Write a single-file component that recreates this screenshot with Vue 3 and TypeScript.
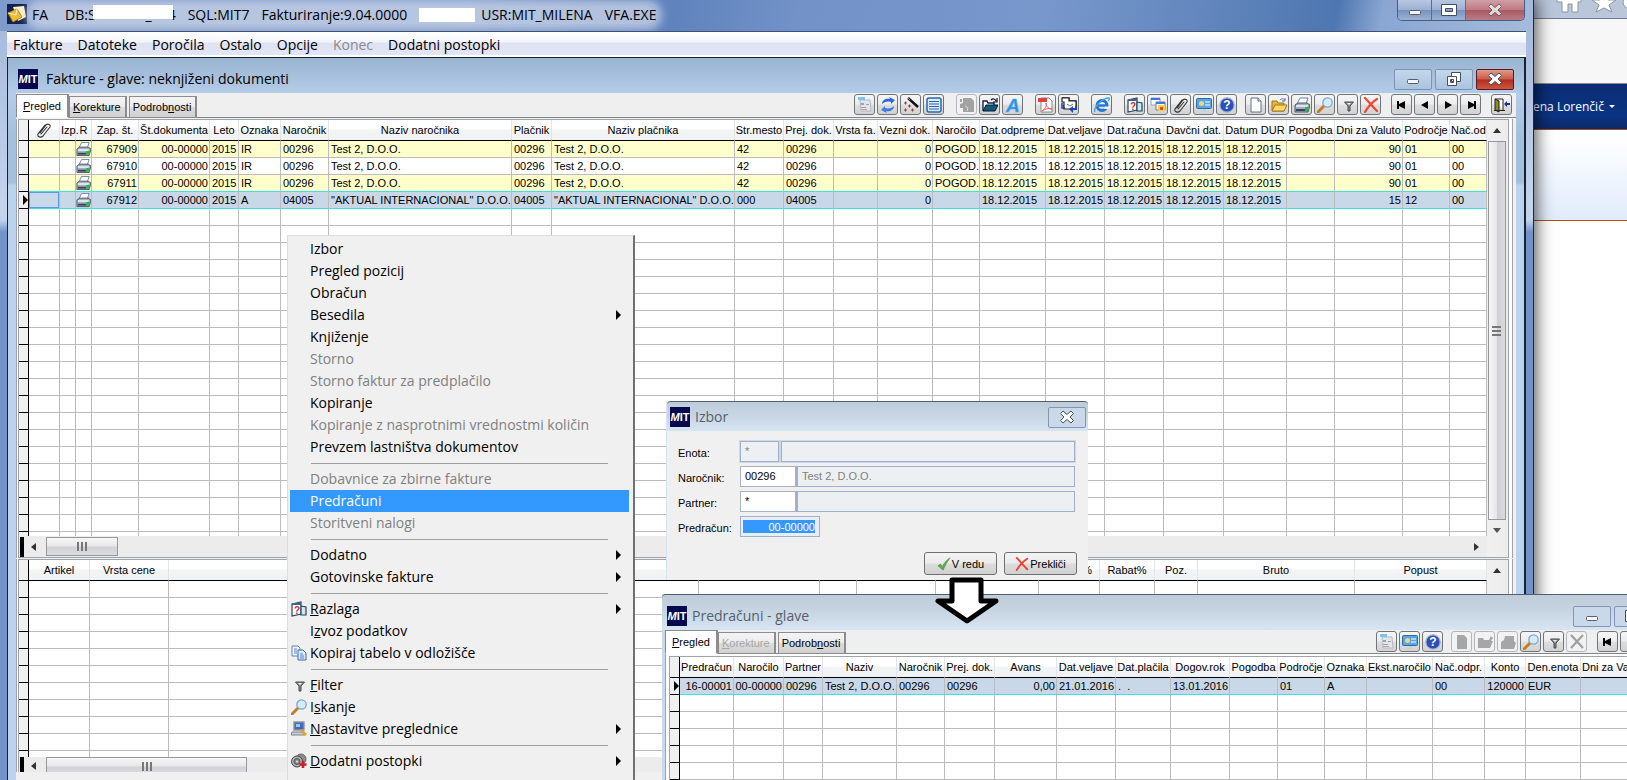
<script setup lang="ts">
type Align = 'left' | 'right' | 'center'

interface Column {
  label: string
  width: number
  align?: Align
  head?: Align
  icon?: string
}

interface MenuItem {
  label?: string
  key?: string
  icon?: string
  disabled?: boolean
  active?: boolean
  submenu?: boolean
  separator?: boolean
}

interface Tool {
  icon: string
  title: string
  disabled?: boolean
}

const mainMenu = [
  { label: 'Fakture' },
  { label: 'Datoteke' },
  { label: 'Poročila' },
  { label: 'Ostalo' },
  { label: 'Opcije' },
  { label: 'Konec', disabled: true },
  { label: 'Dodatni postopki' },
]

const columns: Column[] = [
  { label: '', width: 31, icon: 'clip' },
  { label: 'Izp.', width: 16, head: 'left' },
  { label: 'R', width: 16 },
  { label: 'Zap. št.', width: 47, align: 'right' },
  { label: 'Št.dokumenta', width: 71, align: 'right' },
  { label: 'Leto', width: 29 },
  { label: 'Oznaka', width: 42 },
  { label: 'Naročnik', width: 48 },
  { label: 'Naziv naročnika', width: 183 },
  { label: 'Plačnik', width: 40 },
  { label: 'Naziv plačnika', width: 183 },
  { label: 'Str.mesto', width: 49 },
  { label: 'Prej. dok.', width: 50 },
  { label: 'Vrsta fa.', width: 44 },
  { label: 'Vezni dok.', width: 55, align: 'right' },
  { label: 'Naročilo', width: 47 },
  { label: 'Dat.odpreme', width: 66 },
  { label: 'Dat.veljave', width: 59 },
  { label: 'Dat.računa', width: 59 },
  { label: 'Davčni dat.', width: 60 },
  { label: 'Datum DUR', width: 63 },
  { label: 'Pogodba', width: 48 },
  { label: 'Dni za Valuto', width: 68, align: 'right' },
  { label: 'Področje', width: 47 },
  { label: 'Nač.od', width: 37, head: 'left' },
]

const day = '18.12.2015'
const invoice = (n: string): string[] => [
  '', '', '*', n, '00-00000', '2015', 'IR', '00296', 'Test 2, D.O.O.', '00296', 'Test 2, D.O.O.',
  '42', '00296', '', '0', 'POGOD.', day, day, day, day, day, '', '90', '01', '00',
]
const rows: string[][] = [
  invoice('67909'),
  invoice('67910'),
  invoice('67911'),
  [
    '', '', '*', '67912', '00-00000', '2015', 'A', '04005', '"AKTUAL INTERNACIONAL" D.O.O.', '04005',
    '"AKTUAL INTERNACIONAL" D.O.O.', '000', '04005', '', '0', '', day, day, day, day, day, '', '15', '12', '00',
  ],
]

const itemColumns: Column[] = [
  { label: 'Artikel', width: 61 },
  { label: 'Vrsta cene', width: 79 },
  { label: '', width: 530 },
  { label: '', width: 121 },
  { label: '', width: 37 },
  { label: '', width: 79 },
  { label: '', width: 103 },
  { label: '%', width: 61, head: 'right' },
  { label: 'Rabat%', width: 55 },
  { label: 'Poz.', width: 43 },
  { label: 'Bruto', width: 157 },
  { label: 'Popust', width: 132 },
]

const quoteColumns: Column[] = [
  { label: 'Predračun', width: 54, align: 'right' },
  { label: 'Naročilo', width: 50, align: 'right' },
  { label: 'Partner', width: 39 },
  { label: 'Naziv', width: 74 },
  { label: 'Naročnik', width: 48 },
  { label: 'Prej. dok.', width: 50 },
  { label: 'Avans', width: 62, align: 'right' },
  { label: 'Dat.veljave', width: 59 },
  { label: 'Dat.plačila', width: 55 },
  { label: 'Dogov.rok', width: 59 },
  { label: 'Pogodba', width: 48 },
  { label: 'Področje', width: 47 },
  { label: 'Oznaka', width: 42 },
  { label: 'Ekst.naročilo', width: 66 },
  { label: 'Nač.odpr.', width: 52 },
  { label: 'Konto', width: 41, align: 'right' },
  { label: 'Den.enota', width: 55 },
  { label: 'Dni za Valuto', width: 90, head: 'left' },
]
const quoteRow = [
  '16-00001', '00-00000', '00296', 'Test 2, D.O.O.', '00296', '00296', '0,00', '21.01.2016', '.  .',
  '13.01.2016', '', '01', 'A', '', '00', '120000', 'EUR', '',
]

const tabs = [
  { before: '', key: 'P', after: 'regled' },
  { before: '', key: 'K', after: 'orekture' },
  { before: 'Podrob', key: 'n', after: 'osti' },
]

const toolGroups: Tool[][] = [
  [
    { icon: 'form', title: 'Obrazec' },
    { icon: 'refresh', title: 'Osveži' },
    { icon: 'wand', title: 'Čarovnik' },
    { icon: 'list', title: 'Seznam' },
  ],
  [
    { icon: 'import', title: 'Uvoz', disabled: true },
    { icon: 'open', title: 'Odpri' },
    { icon: 'font', title: 'Pisava' },
  ],
  [
    { icon: 'pdf', title: 'PDF' },
    { icon: 'mail', title: 'Pošta' },
  ],
  [{ icon: 'web', title: 'Splet' }],
  [
    { icon: 'explain', title: 'Razlaga' },
    { icon: 'windows', title: 'Okna' },
    { icon: 'clip', title: 'Priponke' },
    { icon: 'monitor', title: 'Zaslon' },
    { icon: 'help', title: 'Pomoč' },
  ],
  [
    { icon: 'new', title: 'Novo' },
    { icon: 'folder', title: 'Popravi' },
    { icon: 'print', title: 'Tiskaj' },
    { icon: 'find', title: 'Iskanje' },
    { icon: 'filter', title: 'Filter' },
    { icon: 'delete', title: 'Briši' },
  ],
  [
    { icon: 'first', title: 'Prvi' },
    { icon: 'prev', title: 'Prejšnji' },
    { icon: 'next', title: 'Naslednji' },
    { icon: 'last', title: 'Zadnji' },
  ],
  [{ icon: 'exit', title: 'Izhod' }],
]

const quoteTools: Tool[][] = [
  [
    { icon: 'form', title: 'Obrazec' },
    { icon: 'monitor', title: 'Zaslon' },
    { icon: 'help', title: 'Pomoč' },
  ],
  [
    { icon: 'new-off', title: 'Novo', disabled: true },
    { icon: 'folder-off', title: 'Popravi', disabled: true },
    { icon: 'print-off', title: 'Tiskaj', disabled: true },
    { icon: 'find', title: 'Iskanje' },
    { icon: 'filter', title: 'Filter' },
    { icon: 'delete-off', title: 'Briši', disabled: true },
  ],
  [
    { icon: 'first', title: 'Prvi' },
    { icon: 'prev', title: 'Prejšnji' },
    { icon: 'next', title: 'Naslednji' },
    { icon: 'last', title: 'Zadnji' },
  ],
]

const contextMenu: MenuItem[] = [
  { label: 'Izbor' },
  { label: 'Pregled pozicij' },
  { label: 'Obračun' },
  { label: 'Besedila', submenu: true },
  { label: 'Knjiženje' },
  { label: 'Storno', disabled: true },
  { label: 'Storno faktur za predplačilo', disabled: true },
  { label: 'Kopiranje' },
  { label: 'Kopiranje z nasprotnimi vrednostmi količin', disabled: true },
  { label: 'Prevzem lastništva dokumentov' },
  { separator: true },
  { label: 'Dobavnice za zbirne fakture', disabled: true },
  { label: 'Predračuni', active: true },
  { label: 'Storitveni nalogi', disabled: true },
  { separator: true },
  { label: 'Dodatno', submenu: true },
  { label: 'Gotovinske fakture', submenu: true },
  { separator: true },
  { label: 'Razlaga', key: 'R', icon: 'explain', submenu: true },
  { label: 'Izvoz podatkov', key: 'z' },
  { label: 'Kopiraj tabelo v odložišče', icon: 'copy' },
  { separator: true },
  { label: 'Filter', key: 'F', icon: 'filter' },
  { label: 'Iskanje', key: 's', icon: 'find' },
  { label: 'Nastavitve preglednice', key: 'N', icon: 'settings', submenu: true },
  { separator: true },
  { label: 'Dodatni postopki', key: 'D', icon: 'gears', submenu: true },
]

function parts(item: MenuItem): [string, string, string] {
  const text = item.label ?? ''
  const at = item.key ? text.indexOf(item.key) : -1
  return at < 0 ? [text, '', ''] : [text.slice(0, at), text[at], text.slice(at + 1)]
}
</script>

<template>
  <div class="desktop">
    <svg class="sprite" aria-hidden="true">
      <symbol id="form" viewBox="0 0 16 16">
        <path d="M3 3h10l1 11H4z" fill="#e2e6ea" stroke="#b4bcc6" />
        <path d="M1 0h7v3H1z" fill="#7cc4ec" />
        <path d="M4 6h3v2H4zM4 10h5v1H4zM9 7h3v1H9z" fill="#9aa4b0" /><path d="M4 12h6v1H4z" fill="#d09aa0" />
      </symbol>
      <symbol id="refresh" viewBox="0 0 16 16">
        <path d="M2 7c0-4 4-6 8-5l-1-2 6 3-4 4v-2C7 4 4 5 2 7z" fill="#2a66d8" />
        <path d="M14 9c0 4-4 6-8 5l1 2-6-3 4-4v2c4 1 7 0 9-2z" fill="#3d7be8" />
      </symbol>
      <symbol id="wand" viewBox="0 0 16 16">
        <path d="M5 1l10 9" stroke="#111" stroke-width="2.4" /><path d="M5 1l2 2" stroke="#999" stroke-width="1" />
        <path d="M1 6h3M2.500 4.500v3M5 9h3M6.500 7.500v3M1 13h3M2.500 11.500v3M8 13h3M9.500 11.500v3" stroke="#9c3a3a" />
      </symbol>
      <symbol id="list" viewBox="0 0 16 16">
        <rect x="1" y="1" width="14" height="14" rx="2" fill="#dbeafa" stroke="#2c67ad" stroke-width="1.500" />
        <path d="M3 4.500h10M3 7h10M3 9.500h10M3 12h10" stroke="#2c67ad" stroke-width="1.200" />
      </symbol>
      <symbol id="import" viewBox="0 0 16 16">
        <path d="M4 1h8l3 3v11H4v-4H1V7l3-1zM1 2h2v3H1z" fill="#a2a2a2" /><path d="M6 9l3 2-1 3" stroke="#ddd" fill="none" />
      </symbol>
      <symbol id="open" viewBox="0 0 16 16">
        <path d="M1 14V4h4l1 2h6v2" fill="#fff" stroke="#10244a" stroke-width="1.400" />
        <path d="M1 14l3-6h12l-3 6z" fill="#0e5a78" stroke="#08152e" /><path d="M9 3c2-2 4-1 5 1M15 1v4h-4" stroke="#08152e" fill="none" stroke-width="1.200" />
      </symbol>
      <symbol id="font" viewBox="0 0 16 16">
        <text x="1" y="15" font-size="19" font-weight="700" font-style="italic" font-family="Liberation Sans" fill="#2f8be0" stroke="#5fb0f0" stroke-width="0.600">A</text>
      </symbol>
      <symbol id="pdf" viewBox="0 0 16 16">
        <path d="M3 1h8l3 3v11H3z" fill="#fff" stroke="#888" /><path d="M0 1h9v4H0z" fill="#d8433f" />
        <path d="M4 14c4-3 5-6 4-8 0 4 3 6 6 6-4-1-7 0-10 2z" fill="none" stroke="#e0605c" />
      </symbol>
      <symbol id="mail" viewBox="0 0 16 16">
        <path d="M1 1h7v3h7v8h-4M3 12V8" fill="none" stroke="#222" stroke-width="1.300" />
        <path d="M1 1h7v3h7v8H3V5H1z" fill="#fff" stroke="#222" stroke-width="1.200" />
        <path d="M6 7l3 2 3-2" fill="none" stroke="#667" /><path d="M8 12l4-3v2h2V9h2v4h-4v3z" fill="#1c46b0" /><path d="M1 6v5h3" fill="none" stroke="#1c46b0" stroke-width="1.500" />
      </symbol>
      <symbol id="web" viewBox="0 0 16 16">
        <circle cx="8" cy="8.500" r="5" fill="none" stroke="#2176d2" stroke-width="3" />
        <path d="M4 8.500h10" stroke="#2176d2" stroke-width="2.400" /><path d="M10 12h6V9.500h-5z" fill="#f4f4f4" />
        <path d="M1 15C-1 11 8 1 15 1c1 1 0 2-1 3" fill="none" stroke="#4aa0ec" stroke-width="1.300" />
      </symbol>
      <symbol id="explain" viewBox="0 0 16 16">
        <path d="M1 3l9-2v12l-9 2z" fill="#fff" stroke="#23475e" stroke-width="1.200" /><path d="M1 2h9v2H1z" fill="#3a6a86" />
        <path d="M10 5l5 1v8h-5z" fill="#cfe6f4" stroke="#23475e" stroke-width="1.200" />
        <text x="3" y="12.500" font-size="10" font-weight="700" font-family="Liberation Sans" fill="#d42a3a">?</text>
      </symbol>
      <symbol id="windows" viewBox="0 0 16 16">
        <path d="M1 1h9v7H1z" fill="#fff" stroke="#8aa4cc" /><path d="M1 1h9v2H1z" fill="#3f78d8" />
        <path d="M6 5h9v8H6z" fill="#fff" stroke="#8a6a9c" /><path d="M6 5h9v2H6z" fill="#3f78d8" />
        <path d="M8 8h7v6H8z" fill="#f8d43a" /><path d="M10 10h3v3h-3z" fill="#d84a28" />
      </symbol>
      <symbol id="clip" viewBox="0 0 16 16">
        <path d="M4 11l6-8c2-2 5 0 4 2l-7 9c-2 2-6 1-5-2l7-9M5 12l6-7" fill="none" stroke="#333" stroke-width="1.100" stroke-linecap="round" />
      </symbol>
      <symbol id="monitor" viewBox="0 0 16 16">
        <rect x="0.500" y="1.500" width="15" height="10" rx="1" fill="#57a7e2" stroke="#2b6ca6" /><circle cx="5.500" cy="6.500" r="2.500" fill="#f4d27a" />
        <path d="M9 5h5M9 8h5" stroke="#fff" stroke-width="1.200" /><path d="M5 15c0-2 6-2 6 0zM7 12h3v2H7z" fill="#c8d0da" />
      </symbol>
      <symbol id="help" viewBox="0 0 16 16">
        <circle cx="8" cy="8" r="7.200" fill="#2c50b8" stroke="#a8b4d4" stroke-width="1.200" />
        <text x="8" y="12.200" font-size="12" font-weight="700" text-anchor="middle" font-family="Liberation Sans" fill="#fff">?</text>
      </symbol>
      <symbol id="new" viewBox="0 0 16 16">
        <path d="M3 1h7l3 3v11H3z" fill="#fff" stroke="#5d7288" /><path d="M10 1v3h3" fill="#cfe0f4" stroke="#5d7288" />
      </symbol>
      <symbol id="folder" viewBox="0 0 16 16">
        <path d="M1 14V4h5l1 2h6v8z" fill="#e6b43c" stroke="#a87412" /><path d="M1 14l3-6h12l-3 6z" fill="#ffd970" stroke="#a87412" />
        <path d="M9 3c2-2 4-1 5 0M14 1v3h-3" fill="none" stroke="#4a7eb8" />
      </symbol>
      <symbol id="print" viewBox="0 0 16 16">
        <path d="M6 1h8l-2 6H3z" fill="#fff" stroke="#6c84a0" /><path d="M1 8l3-2h9l3 2-2 7H1z" fill="#a4b0be" stroke="#4c5866" />
        <path d="M2 8h12l-1 2H2z" fill="#dfe5ec" /><path d="M2 12h9v2H2z" fill="#34465e" /><path d="M11 10h4l-1 4h-3z" fill="#28b83c" />
      </symbol>
      <symbol id="find" viewBox="0 0 16 16">
        <path d="M1 15l6-6" stroke="#c87a24" stroke-width="3" stroke-linecap="round" />
        <circle cx="10.500" cy="5.500" r="4.700" fill="#d4ebfb" stroke="#7fa6cc" stroke-width="1.300" />
      </symbol>
      <symbol id="filter" viewBox="0 0 16 16">
        <path d="M4.500 5h9L10 9v5H8V9z" fill="#8c9298" stroke="#44484c" /><path d="M7 6h4L9 8z" fill="#f2f2f2" />
      </symbol>
      <symbol id="delete" viewBox="0 0 16 16">
        <path d="M2 1c4 4 8 9 12 13M14 2C9 5 5 10 2 15" fill="none" stroke="#ee4433" stroke-width="2.200" stroke-linecap="round" />
      </symbol>
      <symbol id="first" viewBox="0 0 16 16"><path d="M3 4h2v3l6-3v8L5 9v3H3z" fill="#000" /></symbol>
      <symbol id="prev" viewBox="0 0 16 16"><path d="M4 8l7-4v8z" fill="#000" /></symbol>
      <symbol id="next" viewBox="0 0 16 16"><path d="M12 8L5 4v8z" fill="#000" /></symbol>
      <symbol id="last" viewBox="0 0 16 16"><path d="M13 4h-2v3L5 4v8l6-3v3h2z" fill="#000" /></symbol>
      <symbol id="exit" viewBox="0 0 16 16">
        <path d="M1 2h8v11" fill="#fff" stroke="#222" /><path d="M1 2l4 2v11l-4-2z" fill="#8a8a2a" stroke="#222" />
        <path d="M0 13.500h11" stroke="#222" /><path d="M10 7l3-3v2h3v2h-3v2z" fill="#1a2c9c" />
      </symbol>
      <symbol id="copy" viewBox="0 0 16 16">
        <path d="M1 1h6l2 2v8H1z" fill="#f0f6ff" stroke="#5a84c0" /><path d="M7 5h5l3 3v7H7z" fill="#dceaff" stroke="#3c68ac" />
        <path d="M3 4h3M3 6h3M3 8h3M9 9h3M9 11h4M9 13h4" stroke="#5a84c0" />
      </symbol>
      <symbol id="settings" viewBox="0 0 16 16">
        <rect x="3" y="1" width="10" height="8" fill="#3f6cc0" stroke="#8c949c" stroke-width="1.400" /><path d="M5 3h4v3H5z" fill="#9cc8f4" />
        <path d="M1 11h12l1 3H0z" fill="#c9ced4" stroke="#7c848c" /><path d="M10 9l5 5" stroke="#e6a21c" stroke-width="2.600" />
      </symbol>
      <symbol id="gears" viewBox="0 0 16 16">
        <circle cx="10" cy="6" r="5" fill="#8c8c8c" stroke="#666" /><circle cx="6" cy="8.500" r="5.500" fill="#b4b4b4" stroke="#444" />
        <circle cx="6" cy="8.500" r="3" fill="#888" stroke="#555" /><circle cx="6" cy="8.500" r="1" fill="#eee" />
        <path d="M12 8v7M8.500 11.500h7" stroke="#cc1c24" stroke-width="2.600" />
      </symbol>
      <symbol id="new-off" viewBox="0 0 16 16"><path d="M3 1h7l3 3v11H3z" fill="#a6a6a6" /></symbol>
      <symbol id="folder-off" viewBox="0 0 16 16"><path d="M1 14V4h5l1 2h5l2-4 2 2-2 3h2l-3 7z" fill="#a6a6a6" /></symbol>
      <symbol id="print-off" viewBox="0 0 16 16"><path d="M5 2h9v5l2 2-2 6H1V8l3-2z" fill="#a6a6a6" /></symbol>
      <symbol id="delete-off" viewBox="0 0 16 16"><path d="M2 1l12 13M14 1L2 14" stroke="#a0a0a0" stroke-width="2.200" /></symbol>
      <symbol id="tick" viewBox="0 0 16 16"><path d="M1 10l3-2 2 3c2-4 5-8 9-10-3 4-6 9-8 14z" fill="#5cae4c" stroke="#3f8a34" stroke-width="0.600" /></symbol>
      <symbol id="cross" viewBox="0 0 16 16">
        <path d="M1.500 4.500L4 2l4 3.500L12 2l2.500 2.500L11 8l3.500 3.500L12 14l-4-3.500L4 14l-2.500-2.500L5 8z" fill="#fff" stroke="#4a5260" />
      </symbol>
      <symbol id="minimise" viewBox="0 0 16 16"><rect x="2.500" y="8.500" width="11" height="4" rx="1" fill="#f4f6f8" stroke="#555d6a" /></symbol>
      <symbol id="maximise" viewBox="0 0 16 16"><path d="M0.500 2.500h15v11h-15zM4.500 6.500h7v3h-7z" fill="#fff" fill-rule="evenodd" stroke="#454d60" /></symbol>
      <symbol id="restore" viewBox="0 0 16 16">
        <path d="M5.500 1.500h9v9h-9z" fill="#fff" stroke="#454d60" /><path d="M1.500 5.500h9v9h-9zM4.500 8.500h3v3h-3z" fill="#fff" fill-rule="evenodd" stroke="#454d60" />
      </symbol>
    </svg>

    <section class="browser">
      <div class="browser-bar">
        <svg width="94" height="19" viewBox="0 0 94 19" fill="#fff" stroke="#8794a8">
          <path d="M24 -4L36 -8 48 -1v3h-3v10h-6V4h-4v8h-6V2h-5z" />
          <path d="M59 0h8l4-6 4 6h8l-7 5 3 7-8-4-8 4 3-7z" /><circle cx="97" cy="2" r="7" />
        </svg>
      </div>
      <div class="browser-page"></div>
      <div class="browser-user"><span>ena Lorenčič</span><i></i></div>
      <div class="browser-hero"></div>
    </section>

    <main class="app-window">
      <header class="title-bar">
        <svg class="app-icon" viewBox="0 0 20 20">
          <rect width="20" height="20" fill="#14204e" /><path d="M6 3l11-1 2 11-8 4z" fill="#fff3cc" />
          <path d="M1 9l9-4 5 8-9 5z" fill="#f0bc38" stroke="#b87c10" /><path d="M1 9l8 2 1-6" fill="none" stroke="#fff2b8" />
        </svg>
        <h1 class="app-title">
          <span>FA</span>
          <span class="database">DB:S<b>_</b>4<i></i></span>
          <span>SQL:MIT7</span>
          <span>Fakturiranje:9.04.0000</span>
          <i class="blank"></i>
          <span class="user">USR:MIT_MILENA</span>
          <span>VFA.EXE</span>
        </h1>
        <div class="caption-buttons outer">
          <button type="button" aria-label="Pomanjšaj"><svg><use href="#minimise" /></svg></button>
          <button type="button" aria-label="Povečaj"><svg><use href="#maximise" /></svg></button>
          <button type="button" class="close" aria-label="Zapri"><svg><use href="#cross" /></svg></button>
        </div>
      </header>

      <nav class="menu-bar">
        <button v-for="m in mainMenu" :key="m.label" type="button" :disabled="m.disabled">{{ m.label }}</button>
      </nav>

      <section class="mdi">
        <header class="child-title">
          <span class="logo"><i>M</i>IT</span>
          <h2>Fakture - glave: neknjiženi dokumenti</h2>
          <div class="caption-buttons">
            <button type="button" aria-label="Pomanjšaj"><svg><use href="#minimise" /></svg></button>
            <button type="button" aria-label="Obnovi"><svg><use href="#restore" /></svg></button>
            <button type="button" class="close" aria-label="Zapri"><svg><use href="#cross" /></svg></button>
          </div>
        </header>

        <div class="tab-row">
          <div class="tabs" role="tablist">
            <button v-for="(t, i) in tabs" :key="t.key" type="button" role="tab" :class="{ on: i === 0 }">{{ t.before }}<u>{{ t.key }}</u>{{ t.after }}</button>
          </div>
          <div class="tools">
            <div v-for="(g, i) in toolGroups" :key="i" class="tool-group">
              <button v-for="t in g" :key="t.icon" type="button" :aria-label="t.title" :disabled="t.disabled">
                <svg><use :href="'#' + t.icon" /></svg>
              </button>
            </div>
          </div>
        </div>

        <div class="panes">
          <div class="pane upper">
            <div class="pane-main">
              <div class="grid-area">
                <table class="grid">
                  <colgroup>
                    <col class="mark" />
                    <col v-for="(c, i) in columns" :key="i" :style="{ width: c.width + 'px' }" />
                  </colgroup>
                  <thead>
                    <tr>
                      <th class="mark"></th>
                      <th v-for="(c, i) in columns" :key="i" :class="'head-' + (c.head ?? 'center')">
                        <svg v-if="c.icon" class="head-icon"><use :href="'#' + c.icon" /></svg><template v-else>{{ c.label }}</template>
                      </th>
                    </tr>
                  </thead>
                  <tbody>
                    <tr v-for="(r, ri) in rows" :key="ri" :class="{ striped: ri % 2 === 0, above: ri === 2, current: ri === 3 }">
                      <td class="mark"><i v-if="ri === 3" class="pointer"></i></td>
                      <td v-for="(v, ci) in r" :key="ci" :class="['to-' + (columns[ci].align ?? 'left'), { focus: ri === 3 && ci === 0 }]">
                        <svg v-if="v === '*'" class="cell-icon"><use href="#print" /></svg>
                        <template v-else>{{ v }}</template>
                      </td>
                    </tr>
                    <tr v-for="n in 20" :key="'e' + n">
                      <td class="mark"></td>
                      <td v-for="(c, i) in columns" :key="i"></td>
                    </tr>
                  </tbody>
                </table>
              </div>
              <div class="hscroll">
                <i class="split"></i><i class="arrow left"></i><i class="thumb small"></i><i class="arrow right"></i>
              </div>
            </div>
            <div class="vscroll"><i class="arrow up"></i><i class="thumb"></i><i class="arrow down"></i></div>
          </div>

          <div class="pane lower">
            <div class="pane-main">
              <div class="grid-area">
                <table class="grid">
                  <colgroup>
                    <col class="mark" />
                    <col v-for="(c, i) in itemColumns" :key="i" :style="{ width: c.width + 'px' }" />
                  </colgroup>
                  <thead>
                    <tr>
                      <th class="mark"></th>
                      <th v-for="(c, i) in itemColumns" :key="i" :class="'head-' + (c.head ?? 'center')">{{ c.label }}</th>
                    </tr>
                  </thead>
                  <tbody>
                    <tr v-for="n in 11" :key="n">
                      <td class="mark"></td>
                      <td v-for="(c, i) in itemColumns" :key="i"></td>
                    </tr>
                  </tbody>
                </table>
              </div>
              <div class="hscroll cut"><i class="split"></i><i class="arrow left"></i><i class="thumb large"></i></div>
            </div>
            <div class="vscroll"><i class="arrow up"></i></div>
          </div>
        </div>
      </section>
    </main>

    <ul class="context-menu" role="menu">
      <li v-for="(m, i) in contextMenu" :key="i" :class="{ separator: m.separator }">
        <button v-if="!m.separator" type="button" role="menuitem" :disabled="m.disabled" :class="{ active: m.active }">
          <span class="menu-icon"><svg v-if="m.icon"><use :href="'#' + m.icon" /></svg></span>
          <span>{{ parts(m)[0] }}<u>{{ parts(m)[1] }}</u>{{ parts(m)[2] }}</span>
          <i v-if="m.submenu" class="submenu"></i>
        </button>
      </li>
    </ul>

    <form class="dialog" @submit.prevent>
      <header class="pale-title">
        <span class="logo"><i>M</i>IT</span>
        <h2>Izbor</h2>
        <div class="caption-buttons">
          <button type="button" class="plain" aria-label="Zapri"><svg><use href="#cross" /></svg></button>
        </div>
      </header>
      <div class="fields">
        <label for="enota">Enota:</label>
        <div class="pair narrow"><input id="enota" value="*" disabled /><input aria-label="Naziv enote" disabled /></div>
        <label for="narocnik">Naročnik:</label>
        <div class="pair"><input id="narocnik" value="00296" /><input aria-label="Naziv naročnika" value="Test 2, D.O.O." disabled /></div>
        <label for="partner">Partner:</label>
        <div class="pair"><input id="partner" value="*" /><input aria-label="Naziv partnerja" disabled /></div>
        <label for="predracun">Predračun:</label>
        <div class="chosen"><input id="predracun" value="00-00000" /></div>
      </div>
      <div class="actions">
        <button type="submit"><svg><use href="#tick" /></svg>V redu</button>
        <button type="button"><svg><use href="#delete" /></svg>Prekliči</button>
      </div>
    </form>

    <section class="quotes">
      <header class="pale-title">
        <span class="logo"><i>M</i>IT</span>
        <h2>Predračuni - glave</h2>
        <div class="caption-buttons">
          <button type="button" class="plain" aria-label="Pomanjšaj"><svg><use href="#minimise" /></svg></button>
          <button type="button" class="plain" aria-label="Povečaj"><svg><use href="#maximise" /></svg></button>
          <button type="button" class="plain" aria-label="Zapri"><svg><use href="#cross" /></svg></button>
        </div>
      </header>
      <div class="tab-row">
        <div class="tabs" role="tablist">
          <button v-for="(t, i) in tabs" :key="t.key" type="button" role="tab" :class="{ on: i === 0 }" :disabled="i === 1">{{ t.before }}<u>{{ t.key }}</u>{{ t.after }}</button>
        </div>
        <div class="tools">
          <div v-for="(g, i) in quoteTools" :key="i" class="tool-group">
            <button v-for="t in g" :key="t.icon" type="button" :aria-label="t.title" :disabled="t.disabled">
              <svg><use :href="'#' + t.icon" /></svg>
            </button>
          </div>
        </div>
      </div>
      <div class="quote-pane">
        <table class="grid">
          <colgroup>
            <col class="mark" />
            <col v-for="(c, i) in quoteColumns" :key="i" :style="{ width: c.width + 'px' }" />
            <col />
          </colgroup>
          <thead>
            <tr>
              <th class="mark"></th>
              <th v-for="(c, i) in quoteColumns" :key="i" :class="'head-' + (c.head ?? 'center')">{{ c.label }}</th>
              <th></th>
            </tr>
          </thead>
          <tbody>
            <tr class="current">
              <td class="mark"><i class="pointer"></i></td>
              <td v-for="(v, ci) in quoteRow" :key="ci" :class="'to-' + (quoteColumns[ci].align ?? 'left')">{{ v }}</td>
              <td></td>
            </tr>
            <tr v-for="n in 6" :key="n">
              <td class="mark"></td>
              <td v-for="(c, i) in quoteColumns" :key="i"></td>
              <td></td>
            </tr>
          </tbody>
        </table>
      </div>
    </section>

    <svg class="flow-arrow" viewBox="0 0 68 52" aria-hidden="true">
      <path d="M19 5h29v21h15L34 46 5 26h14z" fill="#fff" stroke="#000" stroke-width="5" stroke-linejoin="round" />
    </svg>
  </div>
</template>

<style>
body {
  margin: 0;
  overflow: hidden;
}
</style>

<style scoped>
.desktop,
.desktop * {
  box-sizing: border-box;
}
.desktop {
  position: relative;
  height: 100vh;
  overflow: hidden;
  background: #fff;
  color: #000;
  font: 11px/16px "Liberation Sans", Arial, sans-serif;
}
.sprite {
  display: none;
}
button,
input {
  font: inherit;
  color: inherit;
  margin: 0;
  padding: 0;
}
h1,
h2,
ul {
  margin: 0;
  padding: 0;
  font-weight: 400;
  list-style: none;
}
button svg {
  width: 16px;
  height: 16px;
  display: block;
}

/* browser window behind */
.browser {
  position: absolute;
  inset: 0 0 0 auto;
  width: 94px;
}
.browser-bar {
  height: 19px;
  background: #bac7da;
  border-bottom: 1px solid #6f7c90;
  overflow: hidden;
}
.browser-page {
  height: 65px;
  background: #f7f7f8;
  border-bottom: 1px solid #8c8c90;
}
.browser-user {
  height: 46px;
  display: flex;
  align-items: center;
  gap: 5px;
  background: linear-gradient(#0c2c72, #0a3482 70%, #0c2a68);
  border-bottom: 1px solid #a04a20;
  color: #fff;
  font: 12px/16px "Open Sans", "Noto Sans", sans-serif;
  white-space: nowrap;
}
.browser-user i {
  border: 3px solid transparent;
  border-top-color: #fff;
  border-bottom: 0;
}
.browser-hero {
  height: 91px;
  background: linear-gradient(#fff 10%, #e0ebfb);
  border-bottom: 1px solid #b8501c;
}

/* application frame */
.app-window {
  position: relative;
  height: 100%;
  margin-right: 93px;
  padding: 0 7px;
  display: flex;
  flex-direction: column;
  background: linear-gradient(#a3b7da, #c3d3ec 200px, #c3d3ec 220px, #7193c9 232px);
  border-right: 1px solid #1c2840;
  box-shadow: 0 0 16px 2px rgba(0, 0, 0, 0.7);
}
.title-bar {
  height: 31px;
  margin: 0 -7px;
  padding: 0 8px 0 7px;
  display: flex;
  align-items: flex-start;
  background: linear-gradient(100deg, #7f9bcb, #7f9bcb 30%, #5f83bc 44%, #7292c8 52%, #7898cc 68%, #5a80b8 82%, #4e76b0 87%, #8aa6d2 90%, #a5bbdc);
}
.app-icon {
  width: 20px;
  height: 20px;
  margin-top: 4px;
}
.app-title {
  height: 18px;
  margin: 6px 0 0 5px;
  display: flex;
  align-items: center;
  gap: 12px;
  border-radius: 9px;
  background: rgba(196, 208, 229, 0.8);
  box-shadow: 0 0 8px 6px rgba(196, 208, 229, 0.8);
  font: 14px/18px "Open Sans", "Noto Sans", sans-serif;
  white-space: nowrap;
}
.database {
  position: relative;
  margin-left: 5px;
}
.database b {
  display: inline-block;
  width: 72px;
  padding-right: 16px;
  text-align: right;
  font-weight: 400;
}
.database i {
  position: absolute;
  right: 3px;
  top: -1px;
  width: 80px;
  height: 14px;
  background: #fff;
}
.blank {
  width: 56px;
  height: 14px;
  background: #fff;
}
.user {
  margin-left: -6px;
}
.caption-buttons {
  display: flex;
  gap: 3px;
  margin-left: auto;
}
.caption-buttons button {
  width: 38px;
  height: 21px;
  display: grid;
  place-items: center;
  border: 1px solid #7b93b4;
  border-radius: 2px;
  background: linear-gradient(#c4d7eb, #aac4e0);
}
.caption-buttons .close {
  border-color: #5c1a1c;
  background: linear-gradient(#dd9a8c, #cc5a48 48%, #b42c1c 52%, #cc5840);
}
.caption-buttons .plain {
  border-color: #8594b4;
  background: #c9d9ea;
}
.caption-buttons.outer {
  gap: 0;
  border: 1px solid #4a5c80;
  border-top: 0;
  border-radius: 0 0 5px 5px;
  overflow: hidden;
}
.caption-buttons.outer button {
  width: 34px;
  height: 20px;
  border: 0;
  border-right: 1px solid #5a6c90;
  border-radius: 0;
  background: linear-gradient(#b8c8e2, #9ab0d2 50%, #7892bc 50%, #9ab2d6);
}
.caption-buttons.outer .close {
  width: 58px;
  border: 0;
  background: linear-gradient(#d0a0a8, #c07880 50%, #a85860 50%, #b87c88);
}
.outer .close svg {
  opacity: 0.7;
}
.menu-bar {
  height: 26px;
  display: flex;
  align-items: center;
  gap: 15px;
  padding: 0 6px;
  border-top: 1px solid #3c5078;
  background: linear-gradient(#fff, #f2f4fa 40%, #dfe2f2 45%, #e2e5f4 92%, #fff 94%);
  font: 14px/20px "Open Sans", "Noto Sans", sans-serif;
}
.menu-bar button {
  border: 0;
  background: none;
}
.menu-bar button:disabled {
  color: #8a8a8e;
}
.mdi {
  flex: 1;
  min-height: 0;
  display: flex;
  flex-direction: column;
  border: solid #1a2230;
  border-width: 1px 2px 0 1px;
  padding: 0 8px;
  background: linear-gradient(#99b4d1, #b4cce8 36px, #a4c0de 80px, #a4c0de 125px, #bad3ee 127px);
}
.child-title {
  height: 35px;
  flex: none;
  display: flex;
  align-items: center;
  padding: 7px 2px 0;
}
.logo {
  width: 20px;
  height: 20px;
  background: #04084e;
  color: #fff;
  font: 700 11px/20px "Liberation Sans", Arial, sans-serif;
  text-align: center;
}
h2 {
  margin-left: 8px;
  font: 14px/20px "Open Sans", "Noto Sans", sans-serif;
}

/* tabs and tools */
.tab-row {
  height: 24px;
  flex: none;
  display: flex;
  align-items: flex-start;
  background: #efefef;
  border-bottom: 1px solid #80868c;
}
.tabs {
  display: flex;
  align-items: flex-end;
  height: 24px;
}
.tabs button {
  height: 22px;
  margin-right: 2px;
  padding: 0 4px 0 3px;
  border: 1px solid #8c8c90;
  border-right-width: 2px;
  border-bottom-width: 1px;
  background: linear-gradient(#f4f4f4, #ececec 48%, #dcdcdc 52%, #d0d0d0);
  white-space: nowrap;
}
.tabs .on {
  height: 24px;
  margin-right: 0;
  padding: 0 6px;
  border-bottom-color: #fff;
  background: #fff;
}
.tabs button:disabled {
  color: #a6a6a6;
}
.tools {
  display: flex;
  margin: 1px 4px 0 auto;
}
.tool-group {
  display: flex;
  gap: 2px;
  margin-left: 12px;
}
.mdi .tool-group:nth-child(6) {
  margin-left: 8px;
}
.mdi .tool-group:nth-child(n + 7) {
  margin-left: 10px;
}
.tools button {
  width: 21px;
  height: 21px;
  display: grid;
  place-items: center;
  border: 1px solid #70757a;
  border-radius: 3px;
  background: linear-gradient(#f6f6f6, #ececec 48%, #dedede 52%, #d2d2d2);
}
.tools button:disabled {
  border-color: #b4b8bc;
  background: #f2f2f2;
}
.mdi > .tab-row {
  height: 25px;
}
.mdi > .tab-row .tabs {
  height: 25px;
}

/* panes */
.panes {
  flex: 1;
  min-height: 0;
  display: flex;
  flex-direction: column;
  gap: 1px;
  padding-bottom: 8px;
  background: #f0f0f0;
}
.pane {
  position: relative;
  display: flex;
  margin: 0 3px 0 0;
  padding: 0 3px 0 1px;
  border: solid #a0a4a8;
  border-width: 0 1px;
  background: #fcfcfc;
}
.pane-main {
  flex: 1;
  min-width: 0;
  display: flex;
  flex-direction: column;
  border: 1px solid #a0a4a8;
  border-right: 0;
}
.upper {
  flex: 1;
  min-height: 0;
  margin-top: 1px;
}
.lower {
  flex: 0 0 213px;
  min-height: 0;
}
.lower .pane-main,
.lower .vscroll {
  min-height: 0;
  border-bottom: 0;
}
.grid-area {
  flex: 1;
  min-height: 0;
  overflow: hidden;
  background: #fff;
}
.grid {
  width: 100%;
  table-layout: fixed;
  border-collapse: separate;
  border-spacing: 0;
}
col.mark {
  width: 10px;
}
.grid th,
.grid td {
  height: 17px;
  padding: 0;
  border: solid #bcbcbc;
  border-width: 0 1px 1px 0;
  line-height: 16px;
  font-weight: 400;
  white-space: pre;
  overflow: hidden;
}
.grid th {
  height: 21px;
  border-right-color: #e2e4e8;
  border-bottom-color: #000;
  line-height: 20px;
  background: linear-gradient(#fff 45%, #f3f4f6 50%, #f1f2f4);
}
.grid .mark {
  border-right-color: #000;
  border-bottom-color: #000;
  background: #f0f0f0;
}
.head-center {
  text-align: center;
}
.grid .head-left {
  padding-left: 1px;
  text-align: left;
  overflow: visible;
}
.grid .head-right {
  padding-right: 7px;
  text-align: right;
}
.grid .to-left {
  padding-left: 2px;
}
.grid .to-right {
  padding-right: 1px;
  text-align: right;
}
.grid .striped td {
  background: #ffffcc;
}
.grid .current td {
  background: #c8d8e8;
  border-bottom-color: #40dfe4;
}
.grid .above td {
  border-bottom-color: #40dfe4;
}
.grid tr td.mark {
  background: #f0f0f0;
  border-bottom-color: #000;
}
.grid .current .focus {
  box-shadow: inset 0 0 0 1px #5b9ae0;
}
.pointer {
  display: block;
  margin-left: 4px;
  width: 0;
  height: 0;
  border: 5px solid transparent;
  border-left-color: #000;
  border-right: 0;
}
.head-icon,
.cell-icon {
  width: 16px;
  height: 16px;
  display: block;
}
.head-icon {
  margin: 0 auto;
}
.cell-icon {
  margin-left: -2px;
  width: 15px;
}
.hscroll {
  flex: none;
  height: 21px;
  display: flex;
  align-items: center;
  padding-left: 1px;
  background: #ececec;
  overflow: hidden;
}
.hscroll.cut {
  height: 15px;
  align-items: flex-start;
}
.split {
  width: 4px;
  height: 20px;
  background: #000;
}
.arrow {
  width: 0;
  height: 0;
  border: 4px solid transparent;
}
.arrow.left {
  margin-left: 7px;
  border-right: 5px solid #333;
  border-left: 0;
}
.cut .arrow.left {
  margin-top: 5px;
}
.arrow.right {
  margin: 0 8px 0 auto;
  border-left: 5px solid #333;
  border-right: 0;
}
.thumb {
  background: linear-gradient(#f6f6f6, #e8e8e8 48%, #d2d2d6 52%, #dcdce0);
  border: 1px solid #96989c;
  display: grid;
  place-items: center;
}
.thumb::after {
  content: "";
  width: 10px;
  height: 9px;
  background: repeating-linear-gradient(90deg, #777 0 2px, transparent 2px 4px);
}
.hscroll .thumb {
  margin-left: 10px;
  height: 19px;
}
.thumb.small {
  width: 72px;
}
.thumb.large {
  width: 201px;
}
.vscroll {
  width: 22px;
  display: flex;
  flex-direction: column;
  align-items: center;
  border: 1px solid #a0a4a8;
  border-left: 0;
  padding-right: 2px;
  background: linear-gradient(90deg, #f0f0f0, #ececec);
}
.upper .vscroll {
  padding-bottom: 24px;
}
.arrow.up {
  margin-top: 8px;
  border-bottom: 5px solid #333;
  border-top: 0;
}
.arrow.down {
  margin-top: 8px;
  border-top: 5px solid #555;
  border-bottom: 0;
}
.vscroll .thumb {
  flex: 1;
  width: 18px;
  margin-top: 8px;
  background: linear-gradient(90deg, #f6f6f6, #e6e6e8 48%, #d0d0d4 52%, #dadade);
}
.vscroll .thumb::after {
  width: 9px;
  height: 10px;
  background: repeating-linear-gradient(#777 0 2px, transparent 2px 4px);
}

/* context menu */
.context-menu {
  position: absolute;
  left: 287px;
  top: 235px;
  bottom: -4px;
  width: 348px;
  padding: 2px 4px 0 2px;
  border: 1px solid #dcdcdc;
  border-right: 2px solid #707070;
  background: #f0f0f0;
  font: 14px/22px "Open Sans", "Noto Sans", sans-serif;
}
.context-menu button {
  width: 100%;
  height: 22px;
  display: flex;
  align-items: center;
  border: 0;
  background: none;
  text-align: left;
  white-space: nowrap;
}
.context-menu button:disabled {
  color: #808080;
}
.context-menu .active {
  background: #3399ff;
  color: #fff;
}
.menu-icon {
  width: 20px;
  height: 16px;
  padding-left: 1px;
}
.submenu {
  margin: 0 8px 0 auto;
  border: 5px solid transparent;
  border-left-color: #000;
  border-right: 0;
}
.separator {
  height: 10px;
  padding: 5px 21px 0;
}
.separator::before {
  content: "";
  display: block;
  height: 1px;
  background: #a0a0a0;
}

/* selection dialog */
.dialog {
  position: absolute;
  left: 666px;
  top: 401px;
  width: 422px;
  padding-bottom: 5px;
  border-left: 1px solid #d8e4f0;
  background: #f0f0f0;
}
.pale-title {
  height: 30px;
  display: flex;
  align-items: center;
  padding: 1px 2px 0 3px;
  border-top: 1px solid #50606e;
  border-radius: 4px 4px 0 0;
  background: linear-gradient(#bfcddb, #c6d4e2 40%, #d7e4f2);
}
.pale-title h2 {
  margin-left: 5px;
  color: #56606c;
}
.fields {
  display: grid;
  grid-template-columns: 62px 1fr;
  row-gap: 4px;
  padding: 10px 13px 0 11px;
}
.fields label {
  padding-top: 3px;
  line-height: 18px;
}
.pair {
  display: grid;
  grid-template-columns: 56px 1fr;
}
.pair.narrow {
  grid-template-columns: 39px 1fr;
  column-gap: 2px;
}
.pair input {
  min-width: 0;
  height: 21px;
  padding: 0 4px 2px;
  border: 1px solid #a8b4c4;
  border-radius: 0;
  background: #fff;
}
.pair input:disabled {
  border: 1px solid #a0b0c8;
  background: #edf0f2;
  color: #808080;
}
.pair:not(.narrow) input:disabled {
  border-left-width: 2px;
}
.pair.narrow input {
  box-shadow: 0 0 0 1px #cfd9e6;
}
.chosen {
  width: 80px;
  height: 21px;
  padding: 3px 4px 4px 2px;
  border: 1px solid #a0b0c8;
  background: #e8eef4;
}
.chosen input {
  display: block;
  width: 100%;
  height: 13px;
  border: 0;
  background: #3399ff;
  color: #fff;
  text-align: right;
}
.actions {
  display: flex;
  justify-content: flex-end;
  gap: 7px;
  padding: 15px 11px 0;
}
.actions button {
  width: 73px;
  height: 23px;
  display: flex;
  align-items: center;
  justify-content: center;
  gap: 1px;
  border: 1px solid #707070;
  border-radius: 3px;
  background: linear-gradient(#f4f4f4, #ebebeb 48%, #dddddd 52%, #d0d0d0);
}
.actions svg {
  width: 14px;
  height: 14px;
}

/* pro-forma window */
.quotes {
  position: absolute;
  left: 662px;
  right: -68px;
  top: 594px;
  bottom: 0;
  padding-left: 3px;
  display: flex;
  flex-direction: column;
  background: #c9d9ea;
}
.quotes .pale-title {
  height: 36px;
  flex: none;
  margin-left: -3px;
  padding: 7px 2px 0 5px;
}
.quotes .tools {
  margin-right: 8px;
}
.quotes .tool-group {
  margin-left: 8px;
}
.quotes .tool-group:nth-child(3) {
  margin-left: 10px;
}
.quote-pane {
  flex: 1;
  min-height: 0;
  padding: 2px 0 0 3px;
  border-left: 1px solid #a0a4a8;
  background: #fcfcfc;
  overflow: hidden;
}
.quote-pane .grid {
  border: 1px solid #a0a4a8;
  border-bottom: 0;
  background: #fff;
}

.flow-arrow {
  position: absolute;
  left: 933px;
  top: 575px;
  width: 68px;
  height: 52px;
}
</style>
